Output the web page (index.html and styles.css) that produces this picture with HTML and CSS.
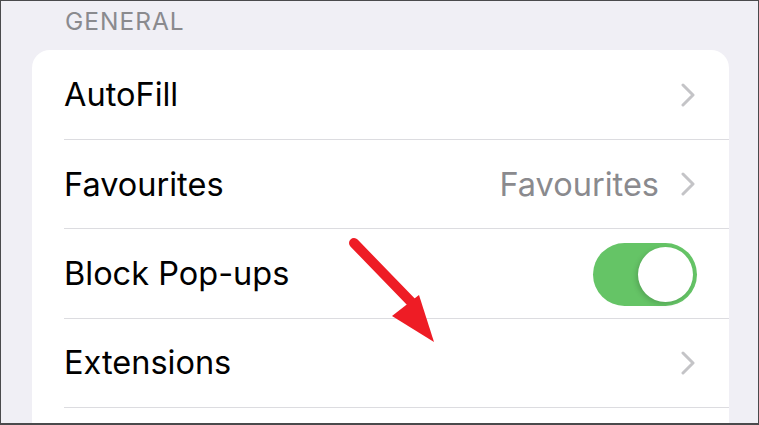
FILE: index.html
```html
<!DOCTYPE html>
<html lang="en">

<head>
    <meta charset="UTF-8">
    <meta name="viewport" content="width=device-width, initial-scale=1.0">
    <title>Safari Settings</title>
    <link rel="stylesheet" href="styles.css">
</head>

<body>

    <div class="screen">
        <div class="section-title">GENERAL</div>

        <div class="card">
            <div class="row">
                <span class="label">AutoFill</span>
                <span class="chevron">
                    <svg width="14" height="24" viewBox="0 0 14 24"><path d="M2 2 L12 12 L2 22" /></svg>
                </span>
            </div>
            <div class="row">
                <span class="label">Favourites</span>
                <span class="value">Favourites</span>
                <span class="chevron">
                    <svg width="14" height="24" viewBox="0 0 14 24"><path d="M2 2 L12 12 L2 22" /></svg>
                </span>
            </div>
            <div class="row">
                <span class="label">Block Pop-ups</span>
                <span class="toggle on"><span class="knob"></span></span>
            </div>
            <div class="row">
                <span class="label">Extensions</span>
                <span class="chevron">
                    <svg width="14" height="24" viewBox="0 0 14 24"><path d="M2 2 L12 12 L2 22" /></svg>
                </span>
            </div>
            <div class="row"></div>
        </div>

        <!-- annotation arrow -->
        <svg class="arrow" width="120" height="120" viewBox="0 0 120 120">
            <line x1="8" y1="8" x2="70" y2="72" />
            <polygon points="46,81 73,60 88,107" />
        </svg>
    </div>

</body>

</html>
```

FILE: styles.css
```css
* {
    box-sizing: border-box;
}

body {
    margin: 0;
    font-family: 'Inter', 'Liberation Sans', sans-serif;
    background-color: #4a4a4c;
}

.screen {
    position: relative;
    width: 759px;
    height: 425px;
    overflow: hidden;
    background-color: #f0eff5;
    border: 1px solid #4a4a4c;
    border-bottom-width: 2px;
}

.section-title {
    height: 49px;
    padding: 5px 0 0 64px;
    font-size: 24.5px;
    letter-spacing: 1px;
    color: #8a8a8e;
}

.card {
    margin: 0 29px 0 31px;
    background-color: #fff;
    border-radius: 18px 18px 0 0;
}

.row {
    display: flex;
    align-items: center;
    height: 89.4px;
    margin-left: 32px;
    padding-right: 32px;
    border-bottom: 1px solid #dcdce0;
}

.row:first-child {
    height: 90px;
}

.label {
    flex: 1;
    font-size: 32.5px;
    color: #000;
}

.value {
    font-size: 32.5px;
    color: #8a8a8e;
    margin-right: 22px;
}

.chevron {
    display: flex;
    margin-right: 2px;
}

.chevron path {
    fill: none;
    stroke: #c4c4c7;
    stroke-width: 3;
    stroke-linecap: round;
    stroke-linejoin: round;
}

.toggle {
    position: relative;
    width: 104px;
    height: 63px;
    border-radius: 32px;
    background-color: #65c466;
    margin-top: 2px;
}

.knob {
    position: absolute;
    top: 4px;
    right: 4px;
    width: 55px;
    height: 55px;
    border-radius: 50%;
    background-color: #fff;
    box-shadow: -2px 2px 5px rgba(0, 0, 0, 0.15);
}

.arrow {
    position: absolute;
    left: 345px;
    top: 234px;
}

.arrow line {
    stroke: #ee1c25;
    stroke-width: 10;
    stroke-linecap: round;
}

.arrow polygon {
    fill: #ee1c25;
}
```
